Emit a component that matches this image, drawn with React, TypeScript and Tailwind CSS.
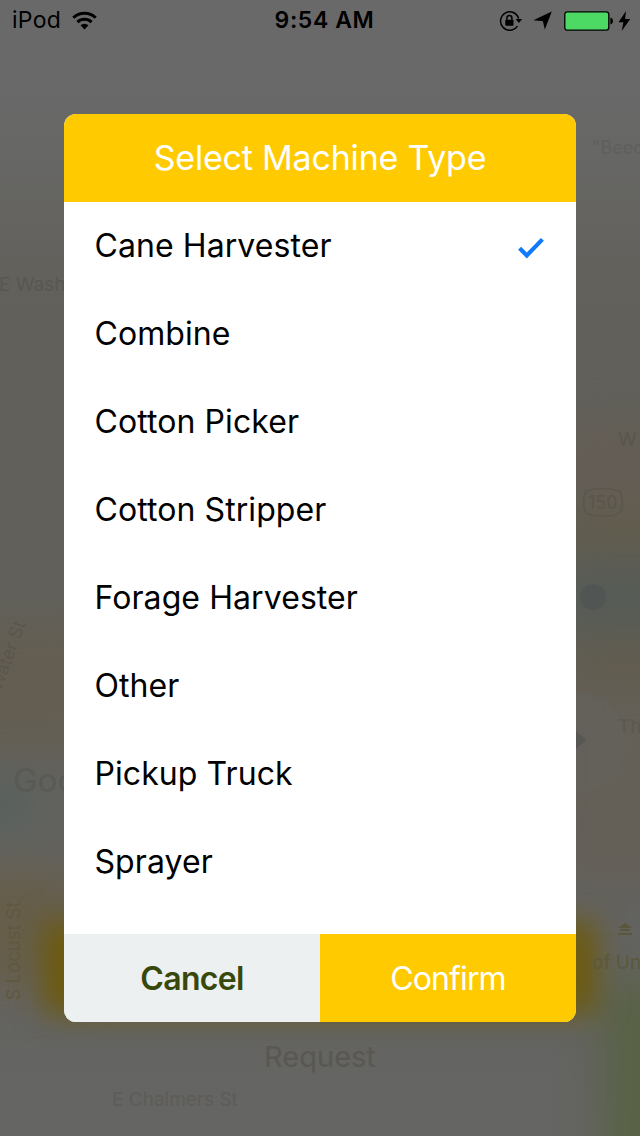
import { useState } from 'react';

const machineTypes = [
  'Cane Harvester',
  'Combine',
  'Cotton Picker',
  'Cotton Stripper',
  'Forage Harvester',
  'Other',
  'Pickup Truck',
  'Sprayer',
];

const mapLabels = [
  { text: '"Beech', className: 'left-[592px] top-[134px] text-[18px] text-[#5f5f5d]' },
  { text: 'E Wash', className: 'left-[-1px] top-[271px] text-[19px] text-[#585751]' },
  { text: 'W', className: 'left-[618px] top-[426px] text-[19px] text-[#59564f]' },
  { text: 'Water St', className: 'left-[-29px] top-[642px] -rotate-70 text-[18px] text-[#5a564e]' },
  { text: 'Th', className: 'left-[618px] top-[713px] text-[19px] text-[#5d5850]' },
  { text: 'Goo', className: 'left-[13px] top-[756px] text-[33px] text-[#595a56]' },
  { text: 'S Locust St', className: 'left-[-36px] top-[937px] -rotate-90 text-[18.5px] text-[#5f583f]' },
  { text: 'of Un', className: 'left-[592px] top-[949px] text-[19px] text-[#5b583d]' },
  { text: 'E Chalmers St', className: 'left-[112px] top-[1086px] text-[19px] text-[#5d5c57]' },
];

function StatusBar() {
  return (
    <header className="grid h-[42px] grid-cols-3 items-center pl-3 pr-[9px] pb-px text-[23px] text-black">
      <div className="flex items-center gap-[11px]">
        <span className="tracking-[0.3px]">iPod</span>
        <svg width="25" height="19" viewBox="0 0 25 19" fill="none" stroke="currentColor" strokeWidth="3">
          <path d="M1.3 6.8a16 16 0 0 1 22.4 0" />
          <path d="M5.4 11.1a10.2 10.2 0 0 1 14.2 0" />
          <path d="M12.5 18.5l-4-4.2a5.8 5.8 0 0 1 8 0z" fill="currentColor" stroke="none" />
        </svg>
      </div>
      <span className="pl-[6px] text-center font-semibold tracking-[0.6px] whitespace-nowrap">9:54 AM</span>
      <div className="flex items-center justify-end">
        {/* Orientation lock */}
        <svg width="24" height="22" viewBox="0 0 24 22" fill="none" stroke="currentColor" strokeWidth="1.5">
          <path d="M18.4 16.2A9.2 9.2 0 1 1 19.6 8.5" />
          <path d="M16.6 9h6.6l-3.3 4z" fill="currentColor" stroke="none" />
          <rect x="6.3" y="9.7" width="8.2" height="6" rx="0.8" fill="currentColor" stroke="none" />
          <path d="M7.9 10V7.9a2.5 2.5 0 0 1 5 0V10" />
        </svg>
        <svg className="ml-[10px]" width="20" height="19" viewBox="0 0 20 19" fill="currentColor">
          <path d="M18.8 0.5L11.8 18.4 9.9 10.2 0.4 9.2z" />
        </svg>
        <svg className="ml-[11px]" width="50" height="20" viewBox="0 0 50 20">
          <rect x="0.8" y="0.8" width="44" height="18.4" rx="2.6" fill="#4cd964" stroke="#000" strokeWidth="1.3" />
          <path d="M46.4 6.5c3.4.6 3.4 6.4 0 7z" fill="#000" />
        </svg>
        <svg className="ml-[4px]" width="13" height="20" viewBox="0 0 13 20" fill="currentColor">
          <path d="M8 0L0.5 11.3h4.9L3.7 20 12.2 8H7.1z" />
        </svg>
      </div>
    </header>
  );
}

function MapTiles() {
  return (
    <svg className="size-full" viewBox="0 0 640 1136">
      <defs>
        <linearGradient id="base" x1="0" y1="0" x2="0" y2="1">
          <stop offset="0.08" stopColor="#696969" />
          <stop offset="0.27" stopColor="#61605a" />
          <stop offset="0.5" stopColor="#61605b" />
          <stop offset="1" stopColor="#656563" />
        </linearGradient>
        {/* sRGB keeps the blurred edges from drifting in hue */}
        <filter id="soft" x="-100%" y="-100%" width="300%" height="300%" colorInterpolationFilters="sRGB">
          <feGaussianBlur stdDeviation="20" />
        </filter>
        <filter id="edge" x="-50%" y="-50%" width="200%" height="200%" colorInterpolationFilters="sRGB">
          <feGaussianBlur stdDeviation="15" />
        </filter>
      </defs>
      <rect width="640" height="1136" fill="url(#base)" />
      <g filter="url(#soft)">
        <rect x="-60" y="620" width="160" height="130" fill="#645e52" />
        <rect x="-60" y="780" width="90" height="50" fill="#57615c" />
        <rect x="-60" y="870" width="140" height="120" fill="#665e4b" />
        <rect x="560" y="420" width="140" height="90" fill="#645d55" />
        <rect x="560" y="515" width="140" height="35" fill="#615b49" />
        <rect x="560" y="645" width="140" height="35" fill="#625b4b" />
        <rect x="560" y="685" width="140" height="200" fill="#645f57" />
        <rect x="560" y="566" width="140" height="65" fill="#565b55" />
        <rect x="602" y="980" width="90" height="220" fill="#596246" />
      </g>
      <circle cx="575" cy="743" r="51" fill="#646462" opacity="0.35" />
      <rect x="44" y="922" width="552" height="92" fill="#6d5a0a" filter="url(#edge)" />
      <circle cx="593" cy="597" r="13" fill="#505555" opacity="0.8" />
      <path d="M576 731l10 9-10 9z" fill="#565653" />
      <path d="M586 491q16-5 34 0q5 12 0 22q-17 7-34 0q-5-10 0-22z" fill="none" stroke="#5b574d" strokeWidth="1.6" />
      <path d="M625 923l7 5h-14zM620 929h10v2h-10zM618 933h14v2h-14z" fill="#5a583c" />
    </svg>
  );
}

function DimmedMap() {
  return (
    <div className="absolute inset-0 overflow-hidden">
      <MapTiles />
      {mapLabels.map(({ text, className }) => (
        <span key={text} className={`absolute whitespace-nowrap ${className}`}>
          {text}
        </span>
      ))}
      <span className="absolute left-[588px] top-[489px] text-[18px] text-[#5a564c]">150</span>
    </div>
  );
}

function CheckIcon() {
  return (
    <svg className="mt-[3px]" width="26" height="22" viewBox="0 0 26 22" fill="none" stroke="#107afb" strokeWidth="4.2">
      <path d="M1.6 11.2l7.2 7.2L24.4 2.4" />
    </svg>
  );
}

export default function App() {
  const [selected, setSelected] = useState('Cane Harvester');

  return (
    <div className="relative h-[1136px] w-[640px] overflow-hidden font-['Inter','Liberation_Sans',sans-serif]">
      <DimmedMap />

      <div className="relative flex h-full flex-col">
        <StatusBar />

        <main className="mx-16 mt-[72px] flex h-[908px] shrink-0 flex-col overflow-hidden rounded-xl bg-white">
          <h1 className="flex h-[88px] shrink-0 items-center justify-center bg-[#ffcb00] pb-[2px] text-[34px] font-normal tracking-[-0.2px] text-white">
            Select Machine Type
          </h1>

          <ul className="flex-1">
            {machineTypes.map((type) => (
              <li key={type}>
                <button
                  onClick={() => setSelected(type)}
                  className="flex h-[88px] w-full items-center justify-between pl-[30.5px] pr-8 text-left text-[32px] tracking-[0.08px] text-black"
                >
                  {type}
                  {selected === type && <CheckIcon />}
                </button>
              </li>
            ))}
          </ul>

          <div className="grid h-[88px] shrink-0 grid-cols-2 text-[32px]">
            <button className="bg-[#ecf0f1] pt-px font-semibold tracking-[-0.7px] text-[#38470b]">Cancel</button>
            <button className="bg-[#ffcb00] pt-px font-normal tracking-[-0.9px] text-white">Confirm</button>
          </div>
        </main>

        <p className="mt-[17px] text-center text-[29px] leading-[36px] text-[#595752]">Request</p>
      </div>
    </div>
  );
}
